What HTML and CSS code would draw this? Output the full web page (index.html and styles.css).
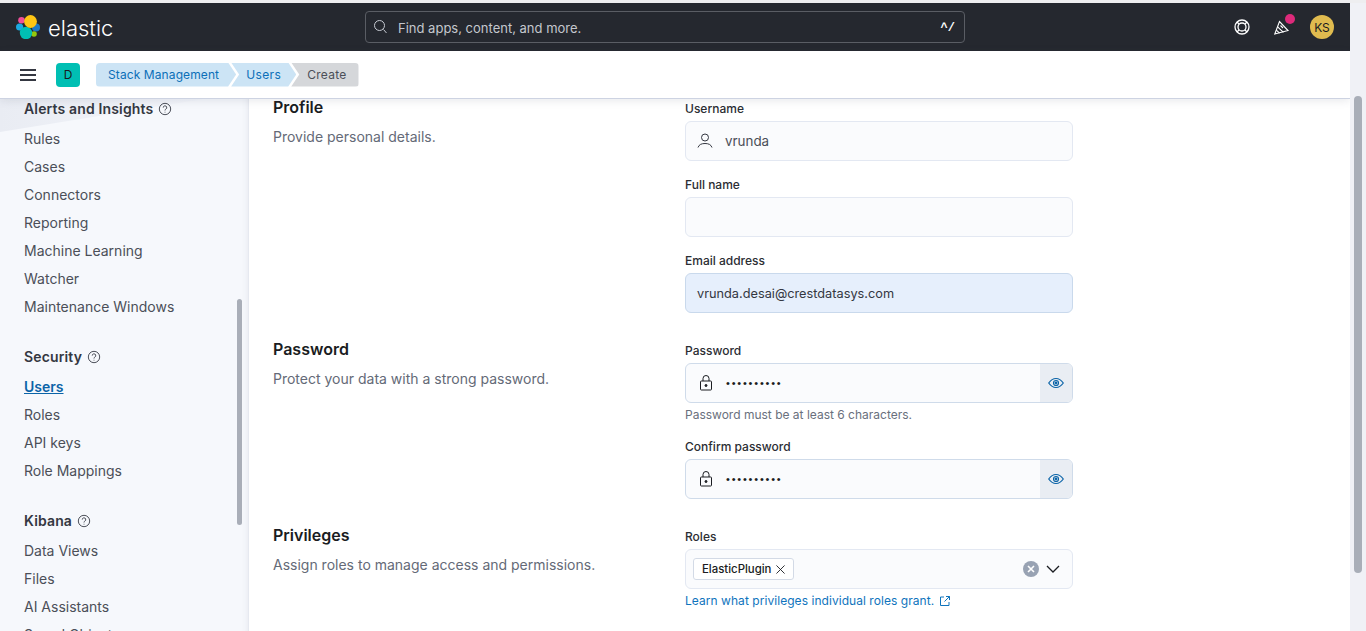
FILE: index.html
```html
<!DOCTYPE html>
<html lang="en">
<head>
<meta charset="utf-8">
<title>Create user - Elastic</title>
<link rel="stylesheet" href="styles.css">
</head>
<body>
<div class="app">
  <header class="topbar">
    <div class="brand">
      <svg class="logo" width="24" height="24" viewBox="0 0 24 24">
        <circle cx="3.600" cy="12" r="3.600" fill="#1ba9e0"/>
        <circle cx="20" cy="12.500" r="4" fill="#1b78c8"/>
        <circle cx="5.500" cy="5.200" r="3.300" fill="#f04e98"/>
        <circle cx="18" cy="19" r="2.800" fill="#93c90e"/>
        <circle cx="10" cy="18" r="6.200" fill="#00bfb3"/>
        <circle cx="14.500" cy="6.500" r="6.400" fill="#fec514"/>
      </svg>
      <span class="wordmark">elastic</span>
    </div>
    <div class="search">
      <svg class="search-icon" width="16" height="16" viewBox="0 0 16 16" fill="none" stroke="#c8ccd4" stroke-width="1"><circle cx="6.500" cy="6.500" r="5"/><path d="M10.500 10.500l3 3.500"/></svg>
      <span class="search-text">Find apps, content, and more.</span>
      <span class="kbd">^/</span>
    </div>
    <div class="top-actions">
      <svg class="help-icon" width="16" height="16" viewBox="0 0 16 16" fill="none" stroke="#fff" stroke-width="1.300"><circle cx="8" cy="8" r="7"/><circle cx="8" cy="8" r="4"/><path d="M3 3l2.200 2.200M13 3l-2.200 2.200M3 13l2.200-2.200M13 13l-2.200-2.200"/></svg>
      <div class="news">
        <svg width="16" height="16" viewBox="0 0 16 16" fill="none" stroke="#fff" stroke-width="1.100"><path d="M.8 15L5.500 2.500 14 11.500z"/><path d="M3.600 7.800l5.800 5.500M2.300 11.200l3.300 3M6.500 6.500l2.500 2.500"/></svg>
        <span class="news-dot"></span>
      </div>
      <span class="avatar">KS</span>
    </div>
  </header>
  <div class="subbar">
    <button class="menu" aria-label="Menu"><span></span><span></span><span></span></button>
    <span class="space">D</span>
    <nav class="crumbs">
      <span class="crumb crumb-first">Stack Management</span>
      <span class="crumb crumb-mid">Users</span>
      <span class="crumb crumb-last">Create</span>
    </nav>
  </div>
  <div class="body-row">
    <aside class="sidebar">
      <div class="side-scroll"></div>
      <div class="side-deco"></div>
      <h3 class="side-head side-first">Alerts and Insights <svg class="q" viewBox="0 0 16 16" width="14" height="14" fill="none" stroke="#343741"><circle cx="8" cy="8" r="6.500"/><path d="M6 6.400a2 2 0 1 1 3 1.700c-.7.400-1 .8-1 1.600M8 11.200v.8"/></svg></h3>
      <a class="side-link">Rules</a>
      <a class="side-link">Cases</a>
      <a class="side-link">Connectors</a>
      <a class="side-link">Reporting</a>
      <a class="side-link">Machine Learning</a>
      <a class="side-link">Watcher</a>
      <a class="side-link">Maintenance Windows</a>
      <h3 class="side-head side-gap">Security <svg class="q" viewBox="0 0 16 16" width="14" height="14" fill="none" stroke="#343741"><circle cx="8" cy="8" r="6.500"/><path d="M6 6.400a2 2 0 1 1 3 1.700c-.7.400-1 .8-1 1.600M8 11.200v.8"/></svg></h3>
      <a class="side-link side-active">Users</a>
      <a class="side-link">Roles</a>
      <a class="side-link">API keys</a>
      <a class="side-link">Role Mappings</a>
      <h3 class="side-head side-gap">Kibana <svg class="q" viewBox="0 0 16 16" width="14" height="14" fill="none" stroke="#343741"><circle cx="8" cy="8" r="6.500"/><path d="M6 6.400a2 2 0 1 1 3 1.700c-.7.400-1 .8-1 1.600M8 11.200v.8"/></svg></h3>
      <a class="side-link">Data Views</a>
      <a class="side-link">Files</a>
      <a class="side-link">AI Assistants</a>
      <a class="side-link">Saved Objects</a>
    </aside>
    <main class="content">
      <section class="group">
        <div class="group-info">
          <h2>Profile</h2>
          <p>Provide personal details.</p>
        </div>
        <div class="group-fields">
          <div class="field">
            <label>Username</label>
            <div class="input">
              <svg class="lead" width="16" height="16" viewBox="0 0 16 16" fill="none" stroke="#343741"><circle cx="8" cy="4.500" r="3.500"/><path d="M1 14.500c1-3 3.500-4 7-4s6 1 7 4"/></svg>
              <span class="value value-muted">vrunda</span>
            </div>
          </div>
          <div class="field">
            <label>Full name</label>
            <div class="input"></div>
          </div>
          <div class="field">
            <label>Email address</label>
            <div class="input input-autofill"><span class="value">vrunda.desai@crestdatasys.com</span></div>
          </div>
        </div>
      </section>
      <section class="group">
        <div class="group-info">
          <h2>Password</h2>
          <p>Protect your data with a strong password.</p>
        </div>
        <div class="group-fields">
          <div class="field">
            <label>Password</label>
            <div class="input input-strong">
              <svg class="lead" width="16" height="16" viewBox="-1 0 16 16" fill="none" stroke="#1a1c21"><rect x="2.500" y="6" width="11" height="9" rx=".8"/><path d="M5 6V3.500a3 3 0 0 1 6 0V6"/><circle cx="8" cy="10.500" r="1" fill="#1a1c21"/></svg>
              <span class="dots">••••••••••</span>
              <span class="eye"><svg width="16" height="16" viewBox="0 0 16 16" fill="none" stroke="#0b64a8" stroke-width="1.200"><path d="M.7 8C3 4.700 5.300 3.500 8 3.500s5 1.200 7.300 4.500C13 11.300 10.700 12.500 8 12.500S3 11.300.7 8z"/><circle cx="8" cy="8" r="2.500"/><circle cx="8" cy="8" r=".8"/></svg></span>
            </div>
            <div class="help">Password must be at least 6 characters.</div>
          </div>
          <div class="field">
            <label>Confirm password</label>
            <div class="input input-strong">
              <svg class="lead" width="16" height="16" viewBox="-1 0 16 16" fill="none" stroke="#1a1c21"><rect x="2.500" y="6" width="11" height="9" rx=".8"/><path d="M5 6V3.500a3 3 0 0 1 6 0V6"/><circle cx="8" cy="10.500" r="1" fill="#1a1c21"/></svg>
              <span class="dots">••••••••••</span>
              <span class="eye"><svg width="16" height="16" viewBox="0 0 16 16" fill="none" stroke="#0b64a8" stroke-width="1.200"><path d="M.7 8C3 4.700 5.300 3.500 8 3.500s5 1.200 7.300 4.500C13 11.300 10.700 12.500 8 12.500S3 11.300.7 8z"/><circle cx="8" cy="8" r="2.500"/><circle cx="8" cy="8" r=".8"/></svg></span>
            </div>
          </div>
        </div>
      </section>
      <section class="group">
        <div class="group-info">
          <h2>Privileges</h2>
          <p>Assign roles to manage access and permissions.</p>
        </div>
        <div class="group-fields">
          <div class="field">
            <label>Roles</label>
            <div class="input input-combo">
              <span class="pill">ElasticPlugin <svg width="9" height="9" viewBox="0 0 10 10" stroke="#1a1c21" fill="none"><path d="M.5.5l9 9M9.500.5l-9 9"/></svg></span>
              <span class="clear"><svg width="8" height="8" viewBox="0 0 8 8" stroke="#fff" stroke-width="1.600" fill="none"><path d="M1 1l6 6M7 1L1 7"/></svg></span>
              <svg class="chev" width="14" height="14" viewBox="0 0 14 14" fill="none" stroke="#1a1c21" stroke-width="1.300"><path d="M1 4l6 6 6-6"/></svg>
            </div>
            <a class="learn">Learn what privileges individual roles grant. <svg width="12" height="12" viewBox="0 0 12 12" fill="none" stroke="#0f74bd"><path d="M5 2H1.500v8.500H10V7M7 1.500h3.500V5M10.500 1.500L5.500 6.500"/></svg></a>
          </div>
        </div>
      </section>
    </main>
  </div>
</div>
<div class="page-scroll"><span class="page-thumb"></span></div>
</body>
</html>
```
FILE: styles.css
```css
* { box-sizing: border-box; }
html, body { margin: 0; height: 631px; overflow: hidden; }
body { display: flex; font-family: Inter, "Noto Sans", sans-serif; color: #343741; padding-top: 3px; background: #eeeef0; }

.app { width: 1350px; height: 628px; display: flex; flex-direction: column; overflow: hidden; }

.topbar { height: 48px; flex: none; background: #25282f; display: flex; align-items: center; padding: 0 16px; }
.brand { display: flex; align-items: center; gap: 8px; width: 349px; }
.logo { display: block; }
.wordmark { color: #fff; font-size: 22px; font-weight: 300; line-height: 1; padding-top: 2px; }
.search { width: 600px; height: 32px; border: 1px solid #5a5d64; border-radius: 4px; display: flex; align-items: center; padding: 0 9px 0 7px; }
.search-icon { flex: none; margin-right: 9px; }
.search-text { flex: 1; color: #c4c7cd; font-size: 13px; padding-top: 2px; }
.kbd { color: #fff; font: 700 12px "Liberation Mono", monospace; padding-top: 2px; }
.top-actions { margin-left: auto; display: flex; align-items: center; }
.help-icon { display: block; margin-right: 24px; }
.news { position: relative; width: 16px; height: 16px; margin-right: 20px; }
.news svg { display: block; }
.news-dot { position: absolute; top: -5px; right: -5px; width: 10px; height: 10px; border-radius: 50%; background: #dd2a7b; }
.avatar { width: 24px; height: 24px; border-radius: 50%; background: #e0bb4f; color: #1a1c21; font-size: 12px; display: flex; align-items: center; justify-content: center; }

.subbar { height: 48px; margin-bottom: -1px; flex: none; background: #fff; display: flex; align-items: center; padding-left: 20px; border-bottom: 1px solid #cdd3e2; box-shadow: 0 2px 8px rgba(70,80,110,.12); position: relative; z-index: 2; }
.menu { width: 16px; height: 12px; padding: 0; border: 0; background: none; display: flex; flex-direction: column; justify-content: space-between; margin-right: 20px; }
.menu span { display: block; height: 2px; background: #343741; }
.space { width: 24px; height: 24px; border-radius: 4px; background: #00bfb3; color: #1a1c21; font-size: 12px; display: flex; align-items: center; justify-content: center; margin-right: 16px; }
.crumbs { display: flex; height: 24px; }
.crumb { font-size: 12px; line-height: 24px; display: block; letter-spacing: .1px; }
.crumb-first { background: #cce4f5; color: #0b6fb8; padding: 0 17px 0 12px; border-radius: 4px 0 0 4px; clip-path: polygon(0 0, calc(100% - 8px) 0, 100% 50%, calc(100% - 8px) 100%, 0 100%); }
.crumb-mid { background: #cce4f5; color: #0b6fb8; padding: 0 15px 0 15px; margin-left: -5px; letter-spacing: .4px; clip-path: polygon(0 0, calc(100% - 8px) 0, 100% 50%, calc(100% - 8px) 100%, 0 100%, 8px 50%); }
.crumb-last { background: #d5d7da; color: #4b4f58; padding: 0 12px 0 16px; margin-left: -5px; letter-spacing: .25px; border-radius: 0 4px 4px 0; clip-path: polygon(0 0, 100% 0, 100% 100%, 0 100%, 8px 50%); }

.body-row { flex: 1; display: flex; min-height: 0; background: #fff; }

.sidebar { width: 249px; flex: none; height: 100%; background: #f6f8fc; padding-left: 24px; position: relative; overflow: hidden; border-right: 1px solid #e6e9f0; box-shadow: inset -6px 0 6px -6px rgba(70,80,110,.1); }
.side-deco { position: absolute; left: 0; top: 0; width: 210px; height: 34px; background: linear-gradient(90deg, #e9ecf3, #f4f6fb); clip-path: polygon(0 0, 100% 0, 0 100%); }
.side-scroll { position: absolute; left: 237px; top: 201px; width: 5px; height: 226px; border-radius: 3px; background: #a9aeb8; }
.side-head { position: relative; margin: 0 0 2px; height: 28px; font-size: 14px; font-weight: 600; line-height: 22px; letter-spacing: .15px; color: #343741; display: flex; align-items: center; gap: 5px; }
.side-first { margin-top: -3px; }
.side-gap { margin-top: 22px; }
.q { display: block; flex: none; }
.side-link { display: block; height: 28px; line-height: 28px; font-size: 14px; color: #4b4f58; position: relative; }
.side-active { color: #0b64a8; font-weight: 600; text-decoration: underline; }

.content { flex: 1; min-width: 0; padding: 1px 0 0 24px; overflow: hidden; }
.group { display: flex; margin-bottom: 28px; }
.group-info { width: 412px; flex: none; }
.group-info h2 { margin: -1px 0 0; font-size: 16px; font-weight: 600; line-height: 18px; color: #1a1c21; }
.group-info p { margin: 12px 0 0; font-size: 14px; line-height: 18px; color: #646a77; }
.group-fields { width: 388px; display: flex; flex-direction: column; gap: 14px; }
.field label { display: block; height: 18px; line-height: 20px; font-size: 12px; font-weight: 500; color: #2b2d33; margin-bottom: 4px; }
.input { height: 40px; border: 1px solid #e3e8f2; border-radius: 6px; background: #fafbfd; display: flex; align-items: center; padding-left: 11px; font-size: 13.4px; overflow: hidden; }
.input-strong { border-color: #cfdbea; }
.input-autofill { background: #e6effc; border-color: #c9d9ec; font-size: 12.750px; }
.lead { flex: none; margin-right: 12px; }
.value { color: #343741; }
.value-muted { color: #4b4f58; }
.dots { flex: 1; color: #1a1c21; font-family: "Liberation Sans", sans-serif; font-size: 11px; letter-spacing: 1.800px; padding-left: 1px; }
.eye { width: 32px; height: 100%; background: #e9edf3; display: flex; align-items: center; justify-content: center; }
.help { margin-top: 4px; height: 16px; line-height: 16px; font-size: 12px; color: #69707d; }
.input-combo { padding: 0 12px 0 7px; }
.pill { height: 22px; border: 1px solid #d3dae6; border-radius: 3px; background: #fff; font-size: 11.400px; font-weight: 500; color: #1a1c21; display: flex; align-items: center; gap: 5px; padding: 0 8px; margin-right: auto; }
.clear { width: 16px; height: 16px; border-radius: 50%; background: #98a2b3; display: flex; align-items: center; justify-content: center; margin-right: 7px; }
.chev { display: block; }
.learn { display: flex; align-items: center; gap: 5px; margin-top: 4px; font-size: 12px; line-height: 16px; letter-spacing: .05px; color: #0f74bd; }

.page-scroll { width: 16px; flex: none; height: 100%; background: #f0f1f6; position: relative; }
.page-thumb { position: absolute; left: 4px; top: 93px; width: 8px; height: 477px; border-radius: 4px; background: #a9aeb8; }
```
